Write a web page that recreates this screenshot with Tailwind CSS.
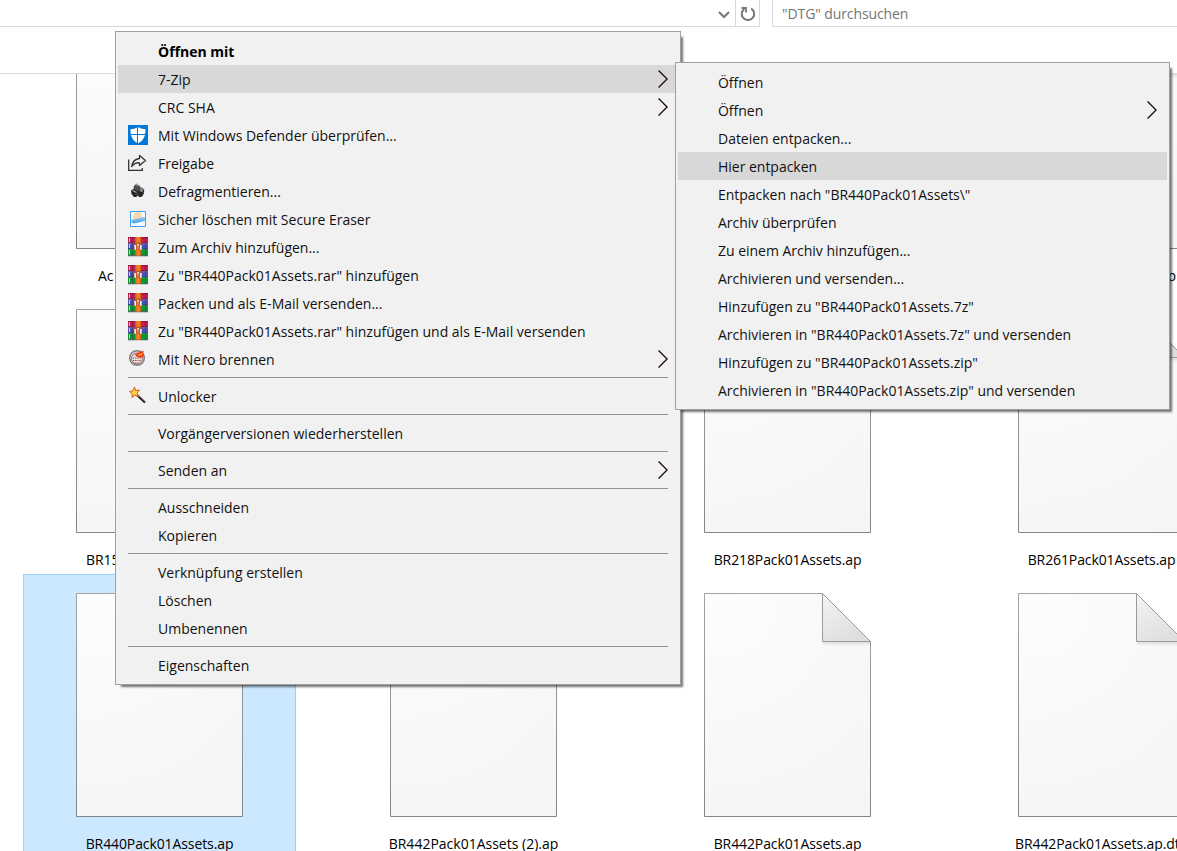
<!DOCTYPE html>
<html lang="de">
<head>
  <meta charset="UTF-8">
  <meta name="viewport" content="width=device-width, initial-scale=1.0">
  <title>DTG</title>
  <script src="https://cdn.jsdelivr.net/npm/@tailwindcss/browser@4"></script>
</head>
<body class="relative flex h-[851px] w-[1177px] flex-col overflow-hidden bg-white font-['Open_Sans','Noto_Sans',sans-serif] text-[14px] leading-7 tracking-[-0.1px] text-[#111]">

<!-- Shared icons -->
<svg class="absolute h-0 w-0">
  <defs>
    <radialGradient id="paper" gradientUnits="userSpaceOnUse" cx="15" cy="10" r="250">
      <stop offset="0" stop-color="#fcfdfc"/><stop offset=".45" stop-color="#f8f9fa"/><stop offset="1" stop-color="#f4f5f7"/>
    </radialGradient>
    <linearGradient id="fold" x1="0" y1="0" x2=".6" y2="1">
      <stop offset="0" stop-color="#f4f4f4"/><stop offset="1" stop-color="#dedede"/>
    </linearGradient>
    <linearGradient id="edge" x1="0" y1="0" x2="0" y2="1">
      <stop offset="0" stop-color="#a2a3a3"/><stop offset="1" stop-color="#858687"/>
    </linearGradient>
    <linearGradient id="eraser" x1="0" y1="0" x2="0" y2="1">
      <stop offset="0" stop-color="#8fcaf8"/><stop offset="1" stop-color="#4c9fe8"/>
    </linearGradient>
    <linearGradient id="strap" x1="0" y1="0" x2="1" y2="0">
      <stop offset="0" stop-color="#c9560c"/><stop offset=".5" stop-color="#f58a30"/><stop offset="1" stop-color="#d3600f"/>
    </linearGradient>
  </defs>
  <symbol id="file" viewBox="0 0 167 224">
    <path d="M.5 .5H118.5L166.5 48.5V223.5H.5Z" fill="url(#paper)" stroke="url(#edge)"/>
    <path d="M119 50H166" stroke="#000" stroke-opacity=".08" stroke-width="2"/>
    <path d="M120 52H165" stroke="#000" stroke-opacity=".03" stroke-width="2"/>
    <path d="M118.500 .5L166.500 48.500H118.500Z" fill="url(#fold)" stroke="#999a9a"/>
  </symbol>
  <symbol id="chevron" viewBox="0 0 10 18" overflow="visible">
    <g fill="none">
      <path d="M0 .5L8.500 9L0 17.500" stroke="#d98a4a" stroke-opacity=".6"/>
      <path d="M1.200 .5L9.700 9L1.200 17.500" stroke="#4a7fc0" stroke-opacity=".5"/>
      <path d="M.6 .5L9.100 9L.6 17.500" stroke="#1c0a0a" stroke-width="1.100"/>
    </g>
  </symbol>
  <symbol id="rar" viewBox="0 0 20 20">
    <path d="M0 0H20V6H0Z" fill="#c41f52"/><path d="M0 0H20V1.300H0Z" fill="#a3163f"/>
    <path d="M0 6H20V12.300H0Z" fill="#4d50b5"/><path d="M0 6H20V7.300H0Z" fill="#6f70cc"/>
    <path d="M0 12.300H20V18.500H0Z" fill="#0d9434"/><path d="M0 12.300H20V13.300H0Z" fill="#2fa846"/>
    <path d="M0 6H20M0 12H20M0 18.500H20" stroke="#252031" stroke-opacity=".7" stroke-width=".7"/>
    <path d="M1.500 1V5M1.500 7V11M1.500 13.300V17.500" stroke="#e8d34b" stroke-width="1"/>
    <path d="M4.500 0V18.500M17.500 0V18.500" stroke="#222" stroke-opacity=".3" stroke-width="1"/>
    <path d="M7 0H13V18.800H7Z" fill="url(#strap)"/>
    <path d="M6.500 12.500V7.500Q6.500 5.800 8 5.800H12Q13.500 5.800 13.500 7.500V12.500Z" fill="#c9501f"/>
    <path d="M7.200 12.800V8M12.800 12.800V8" stroke="#f4f1ee" stroke-width="1.700"/>
    <path d="M9 7H11V12H9Z" fill="#e9d6cc"/>
    <path d="M10 8.500V12.500" stroke="#b23a18" stroke-width="1"/>
    <path d="M0 19.300H20" stroke="#000" stroke-opacity=".2"/>
  </symbol>
</svg>

<!-- Address bar -->
<header class="flex h-[27px] shrink-0 text-[#747474]">
  <div class="flex w-[760px] border-r border-b border-[#d9d9d9]">
    <div class="flex flex-1 items-center justify-end pr-[5px]">
      <svg class="mt-1 h-2 w-3" viewBox="0 0 12 8" fill="none" stroke="#777" stroke-width="2"><path d="M1 1L6 6L11 1"/></svg>
    </div>
    <div class="flex w-[24px] items-center justify-center border-l border-[#d9d9d9]">
      <svg class="mt-px h-4 w-4" viewBox="0 0 16 16" fill="none" stroke="#777" stroke-width="2"><path d="M11.200 2.600A6.200 6.200 0 1 1 4.200 3"/><path d="M1.500 2H6V6.500" stroke-width="1.800"/></svg>
    </div>
  </div>
  <div class="ml-3 flex-1 border-b border-l border-[#d9d9d9] pl-[9px] leading-[27px]">"DTG" durchsuchen</div>
</header>
<div class="h-[47px] shrink-0 border-b border-[#d9d9d9]"></div>

<!-- File list -->
<main class="h-[777px] shrink-0 overflow-hidden text-black">
  <div class="-mt-[68px] ml-[23px] grid w-[1215px] grid-cols-[repeat(4,273px)] auto-rows-[284px] gap-x-[41px] text-center whitespace-nowrap">
    <div class="pt-[19px]"><svg class="mx-auto h-[224px] w-[167px]"><use href="#file"/></svg><p class="mt-[13px] pl-[75px] text-left">Ac</p></div>
    <div></div>
    <div></div>
    <div class="pt-[19px]"><svg class="mx-auto h-[224px] w-[167px]"><use href="#file"/></svg><p class="mt-[13px] pr-[62px] text-right">ap</p></div>

    <div class="pt-[19px]"><svg class="mx-auto h-[224px] w-[167px]"><use href="#file"/></svg><p class="mt-[13px] pl-[63px] text-left">BR15</p></div>
    <div></div>
    <div class="pt-[19px]"><svg class="mx-auto h-[224px] w-[167px]"><use href="#file"/></svg><p class="mt-[13px]">BR218Pack01Assets.ap</p></div>
    <div class="pt-[19px]"><svg class="mx-auto h-[224px] w-[167px]"><use href="#file"/></svg><p class="mt-[13px]">BR261Pack01Assets.ap</p></div>

    <div class="border border-[#99d1ff] bg-[#cce8ff] pt-[18px]"><svg class="mx-auto h-[224px] w-[167px]"><use href="#file"/></svg><p class="mt-[13px]">BR440Pack01Assets.ap</p></div>
    <div class="pt-[19px]"><svg class="mx-auto h-[224px] w-[167px]"><use href="#file"/></svg><p class="mt-[13px] tracking-normal">BR442Pack01Assets (2).ap</p></div>
    <div class="pt-[19px]"><svg class="mx-auto h-[224px] w-[167px]"><use href="#file"/></svg><p class="mt-[13px]">BR442Pack01Assets.ap</p></div>
    <div class="pt-[19px]"><svg class="mx-auto h-[224px] w-[167px]"><use href="#file"/></svg><p class="mt-[13px] pl-[50px] text-left">BR442Pack01Assets.ap.dt</p></div>
  </div>
</main>

<!-- Context menu -->
<ul class="absolute top-[31px] left-[115px] h-[654px] w-[566px] border border-[#a0a0a0] bg-[#f1f1f1] px-0.5 py-[5px] tracking-normal whitespace-nowrap shadow-[4px_4px_2px_-2px_rgba(0,0,0,0.55)]">
  <li class="h-7 pt-px pl-10 font-bold text-black">Öffnen mit</li>
  <li class="flex h-7 items-center bg-[#d8d8d8] pr-[10px] pl-10"><span class="flex-1 pt-0.5">7-Zip</span><svg class="h-[18px] w-[10px]"><use href="#chevron"/></svg></li>
  <li class="flex h-7 items-center pr-[10px] pl-10"><span class="flex-1 pt-0.5">CRC SHA</span><svg class="h-[18px] w-[10px]"><use href="#chevron"/></svg></li>
  <li class="flex h-7 items-center gap-2.5 pl-[10px]">
    <svg class="h-5 w-5" viewBox="0 0 20 20"><path d="M0 0H20V20H0Z" fill="#0078d7"/><path d="M10 2C7.500 3.800 5 4.200 2.500 4.200C2.300 11 4.500 15.500 10 18.500C15.500 15.500 17.700 11 17.500 4.200C15 4.200 12.500 3.800 10 2Z" fill="#fff"/><path d="M9.500 1V19M2 9.500H18" stroke="#0078d7" stroke-width="1"/></svg>
    <span class="pt-0.5">Mit Windows Defender überprüfen...</span>
  </li>
  <li class="flex h-7 items-center gap-2.5 pl-[10px]">
    <svg class="h-5 w-5" viewBox="0 0 20 20" fill="none" stroke="#333" stroke-width="1.300"><path d="M.7 6.500V17.300H14.300V15"/><path d="M11.500 2.500L17.500 7.500L11.500 12.500V9.800C8 9.500 5.500 11 3.700 13.500C4.300 9 7 6 11.500 5.500Z" stroke-linejoin="round"/></svg>
    <span class="pt-0.5">Freigabe</span>
  </li>
  <li class="flex h-7 items-center gap-2.5 pl-[10px]">
    <svg class="h-5 w-5" viewBox="0 0 20 20"><path d="M3 9.500L6 7.500L14 6.500L16.300 9L15.500 13.500L13.500 16H11L10 14.500L8 16H6L3.500 13Z" fill="#242424"/><path d="M5.500 5.500L8.500 2.800L11.500 4.500L13 8L10 10.500L6 8.500Z" fill="#4a4a4a"/><path d="M7 3.800L9 3L10 5.500M4.500 9.500L8.500 11.500" stroke="#aaa" stroke-width="1.200" fill="none"/><circle cx="13.500" cy="9" r="1.900" fill="#858585"/><path d="M7 13.500L11 13" stroke="#555"/></svg>
    <span class="pt-0.5">Defragmentieren...</span>
  </li>
  <li class="flex h-7 items-center gap-2.5 pl-[10px]">
    <svg class="h-5 w-5" viewBox="0 0 20 20"><path d="M2.500 2.500H17.500V17.500H2.500Z" fill="#f5f9fd" stroke="#3ea0f5"/><path d="M5 9C5 5 7 3 10 3C13 3 14 5 14 8V12H6Z" fill="#f8d8aa"/><path d="M3.500 11L15.500 8L17 9V12L6 14.500L3.500 13.500Z" fill="url(#eraser)"/></svg>
    <span class="pt-0.5">Sicher löschen mit Secure Eraser</span>
  </li>
  <li class="flex h-7 items-center gap-2.5 pl-[10px]"><svg class="h-5 w-5"><use href="#rar"/></svg><span class="pt-0.5">Zum Archiv hinzufügen...</span></li>
  <li class="flex h-7 items-center gap-2.5 pl-[10px]"><svg class="h-5 w-5"><use href="#rar"/></svg><span class="pt-0.5">Zu "BR440Pack01Assets.rar" hinzufügen</span></li>
  <li class="flex h-7 items-center gap-2.5 pl-[10px]"><svg class="h-5 w-5"><use href="#rar"/></svg><span class="pt-0.5">Packen und als E-Mail versenden...</span></li>
  <li class="flex h-7 items-center gap-2.5 pl-[10px]"><svg class="h-5 w-5"><use href="#rar"/></svg><span class="pt-0.5">Zu "BR440Pack01Assets.rar" hinzufügen und als E-Mail versenden</span></li>
  <li class="flex h-7 items-center gap-2.5 pr-[10px] pl-[10px]">
    <svg class="h-5 w-5" viewBox="0 0 20 20"><circle cx="9" cy="9" r="7.300" fill="#e6e1e0" stroke="#808080" stroke-width="1.500"/><circle cx="9" cy="9.500" r="5.500" fill="none" stroke="#8a4a46" stroke-width=".8"/><path d="M5 9H13M5 11.500H13M6.500 14H11.500" stroke="#a83c36" stroke-width="1.100" stroke-dasharray="1.200 1"/><path d="M7 6C9 3 12 4 15.500 1.500C15 4 16.500 6 14.500 8C12.500 9.500 9 8.500 7 6Z" fill="#ef3a13"/><path d="M9 6C11 5 12 6 14.500 3.500C14.500 6 13 7.500 9 6Z" fill="#ffc63a"/></svg>
    <span class="flex-1 pt-0.5">Mit Nero brennen</span><svg class="h-[18px] w-[10px]"><use href="#chevron"/></svg>
  </li>
  <li class="mx-[10px] my-1 h-px bg-[#919191]"></li>
  <li class="flex h-7 items-center gap-2.5 pl-[10px]">
    <svg class="h-5 w-5" viewBox="0 0 20 20"><path d="M9 9L17 16.500" stroke="#151515" stroke-width="2.200"/><path d="M10 9L17.500 16" stroke="#aaa" stroke-width=".6"/><path d="M6.500 1L7.700 4.500L11.500 4L9 7L10.500 10.500L7 9L4 11.500L4.200 7.700L1.500 5.500L5 4.700Z" fill="#ffd33e" stroke="#cf4b1d" stroke-width=".9"/></svg>
    <span class="pt-0.5">Unlocker</span>
  </li>
  <li class="mx-[10px] my-1 h-px bg-[#919191]"></li>
  <li class="h-7 pt-px pl-10">Vorgängerversionen wiederherstellen</li>
  <li class="mx-[10px] my-1 h-px bg-[#919191]"></li>
  <li class="flex h-7 items-center pr-[10px] pl-10"><span class="flex-1 pt-0.5">Senden an</span><svg class="h-[18px] w-[10px]"><use href="#chevron"/></svg></li>
  <li class="mx-[10px] my-1 h-px bg-[#919191]"></li>
  <li class="h-7 pt-px pl-10">Ausschneiden</li>
  <li class="h-7 pt-px pl-10">Kopieren</li>
  <li class="mx-[10px] my-1 h-px bg-[#919191]"></li>
  <li class="h-7 pt-px pl-10">Verknüpfung erstellen</li>
  <li class="h-7 pt-px pl-10">Löschen</li>
  <li class="h-7 pt-px pl-10">Umbenennen</li>
  <li class="mx-[10px] my-1 h-px bg-[#919191]"></li>
  <li class="h-7 pt-px pl-10">Eigenschaften</li>
</ul>

<!-- 7-Zip submenu -->
<ul class="absolute top-[62px] left-[675px] h-[348px] w-[495px] border border-[#a0a0a0] bg-[#f1f1f1] px-0.5 py-[5px] tracking-[-0.02px] whitespace-nowrap shadow-[4px_4px_2px_-2px_rgba(0,0,0,0.55)]">
  <li class="h-7 pt-px pl-10">Öffnen</li>
  <li class="flex h-7 items-center pr-[10px] pl-10"><span class="flex-1 pt-0.5">Öffnen</span><svg class="h-[18px] w-[10px]"><use href="#chevron"/></svg></li>
  <li class="h-7 pt-px pl-10">Dateien entpacken...</li>
  <li class="h-7 bg-[#d8d8d8] pt-px pl-10">Hier entpacken</li>
  <li class="h-7 pt-px pl-10">Entpacken nach "BR440Pack01Assets\"</li>
  <li class="h-7 pt-px pl-10">Archiv überprüfen</li>
  <li class="h-7 pt-px pl-10">Zu einem Archiv hinzufügen...</li>
  <li class="h-7 pt-px pl-10">Archivieren und versenden...</li>
  <li class="h-7 pt-px pl-10">Hinzufügen zu "BR440Pack01Assets.7z"</li>
  <li class="h-7 pt-px pl-10">Archivieren in "BR440Pack01Assets.7z" und versenden</li>
  <li class="h-7 pt-px pl-10">Hinzufügen zu "BR440Pack01Assets.zip"</li>
  <li class="h-7 pt-px pl-10">Archivieren in "BR440Pack01Assets.zip" und versenden</li>
</ul>

</body>
</html>
